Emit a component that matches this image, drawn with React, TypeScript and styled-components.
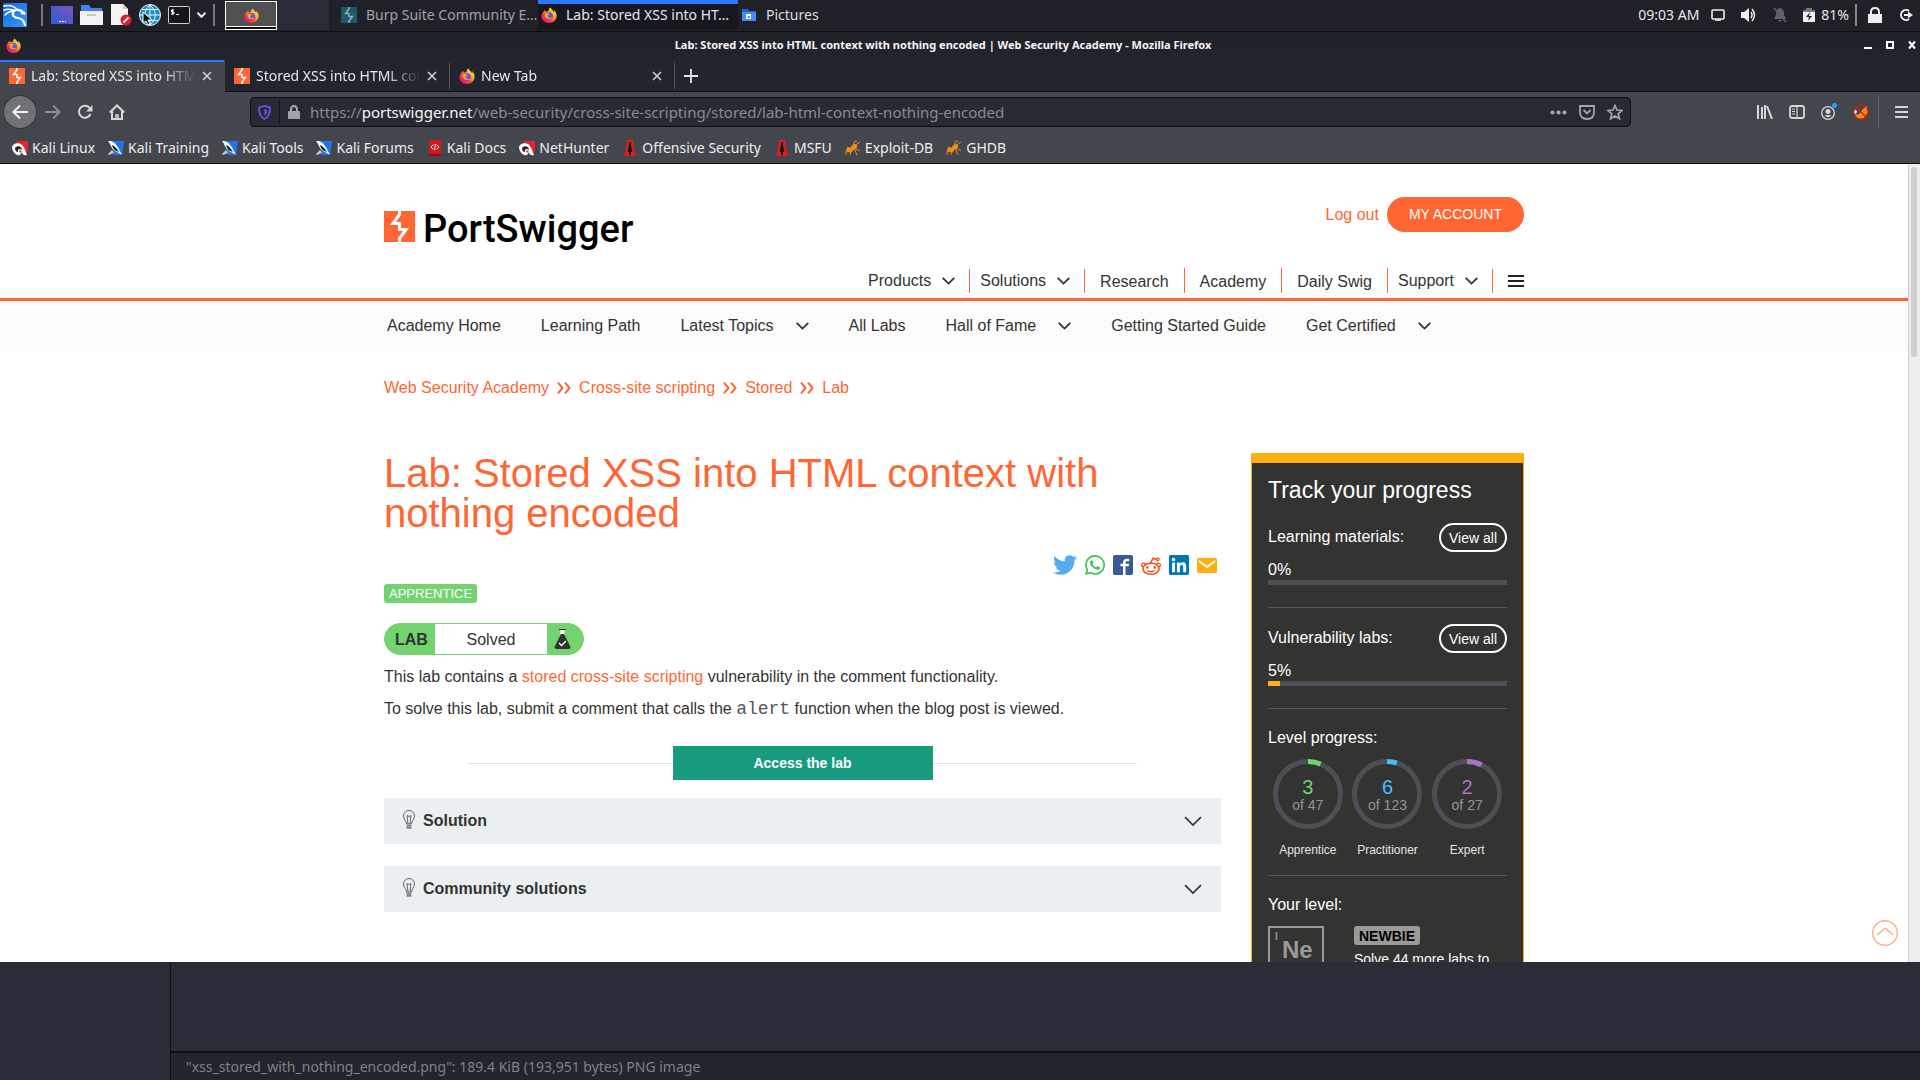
import React from "react";
import styled, { createGlobalStyle } from "styled-components";
import { FaTwitter, FaWhatsapp, FaLinkedin } from "react-icons/fa";
import { ImFacebook2, ImReddit } from "react-icons/im";

const ORANGE = "#ff6633";
const UI = `"Noto Sans", "Open Sans", sans-serif`;
const WEB = `"Liberation Sans", Arial, sans-serif`;

const Global = createGlobalStyle`
  * { box-sizing: border-box; }
  body { margin: 0; background: #2a2c37; overflow: hidden; }
  button { font: inherit; color: inherit; background: none; border: 0; padding: 0; cursor: pointer; }
  a { text-decoration: none; color: inherit; }
  h1, h2, p, ul { margin: 0; padding: 0; font-weight: normal; }
  ul { list-style: none; }
  svg { display: block; flex: none; }
`;

const Desktop = styled.div`
  display: flex;
  flex-direction: column;
  height: 100vh;
  font: 15px/20px ${UI};
  color: #e8e8ea;
  white-space: nowrap;
`;

/* ---------- desktop panel ---------- */
const Panel = styled.header`
  display: flex;
  align-items: stretch;
  height: 32px;
  flex: none;
  background: #1f2028;
  border-bottom: 1px solid #0e0f13;
  font-size: 14px;
`;
const Launchers = styled.nav`
  display: flex;
  align-items: center;
  gap: 7px;
  padding: 0 9px 2px 3px;
`;
const PanelRule = styled.span`
  width: 2px;
  height: 22px;
  margin: 0 1px 0 7px;
  background: #77787c;
  &:last-child { margin-left: 0; }
`;
const Workspaces = styled.div`
  display: flex;
`;
const Workspace = styled.button<{ $active?: boolean }>`
  display: flex;
  align-items: center;
  justify-content: center;
  width: 52px;
  height: ${(p) => (p.$active ? "29px" : "30px")};
  margin-top: ${(p) => (p.$active ? "1px" : "0")};
  background: ${(p) => (p.$active ? "#505050" : "#292b37")};
  border: ${(p) => (p.$active ? "1px solid #fff" : "0")};
  box-shadow: ${(p) => (p.$active ? "inset 0 -2px #111, inset 0 -3px #fff" : "none")};
`;
const Task = styled.button<{ $active?: boolean }>`
  display: flex;
  align-items: center;
  gap: 9px;
  width: 200px;
  height: 30px;
  padding: 0 3px 1px;
  color: ${(p) => (p.$active ? "#e6e6e8" : "#a2a2a6")};
  background: ${(p) => (p.$active ? "#17181f" : "transparent")};
  border-top: ${(p) => (p.$active ? "4px solid #2777ff" : "0")};
  & > span { margin-top: ${(p) => (p.$active ? "-4px" : "0")}; }
  & > svg { margin-top: ${(p) => (p.$active ? "-4px" : "0")}; }
  &:first-child { margin-left: 9px; }
  &:last-child { color: #dcdcde; }
`;
const TaskList = styled.div`
  display: flex;
  flex: 1;
`;
const Tray = styled.div`
  display: flex;
  align-items: center;
  gap: 16px;
  padding: 0 7px 2px 0;
`;
const TrayGroup = styled.span<{ $gap: number }>`
  display: flex;
  align-items: center;
  gap: ${(p) => p.$gap}px;
`;
const TrayRule = styled.span`
  width: 2px;
  height: 22px;
  margin-right: -5px;
  background: #85868a;
`;

/* ---------- browser chrome ---------- */
const Browser = styled.section`
  display: flex;
  flex-direction: column;
  flex: 1;
  min-height: 0;
`;
const TitleBar = styled.div`
  display: grid;
  grid-template-columns: 1fr auto 1fr;
  align-items: center;
  height: 28px;
  flex: none;
  padding: 0 4px 2px 6px;
  background: linear-gradient(#1f2129, #23252e);
  font-size: 11px;
  font-weight: 700;
  color: #f4f4f4;
  & > span { margin-right: 36px; }
`;
const WindowButtons = styled.div`
  display: flex;
  justify-content: flex-end;
  gap: 14px;
  button { width: 8px; height: 10px; display: flex; align-items: center; }
`;
const TabStrip = styled.div`
  display: flex;
  height: 32px;
  flex: none;
  background: #23252e;
  border-bottom: 1px solid #111218;
  font-size: 15px;
`;
const Tab = styled.div<{ $active?: boolean; $rule?: boolean }>`
  display: flex;
  align-items: center;
  width: 225px;
  height: ${(p) => (p.$active ? "32px" : "31px")};
  padding: 0 12px 0 9px;
  background: ${(p) => (p.$active ? "#43464c" : "transparent")};
  box-shadow: ${(p) => (p.$active ? "inset 0 2px #2777ff" : "none")};
  border-right: 1px solid transparent;
  border-image: ${(p) => (p.$rule ? "linear-gradient(transparent 4px, #56585f 4px, #56585f 28px, transparent 28px) 1" : "none")};
`;
const TabTitle = styled.button`
  flex: 1;
  overflow: hidden;
  text-align: left;
  margin: 0 6px;
  font-size: 14px;
  mask-image: linear-gradient(90deg, #000 calc(100% - 34px), transparent);
`;
const NewTab = styled.button`
  padding: 0 9px;
`;
const Toolbar = styled.div`
  display: flex;
  align-items: center;
  height: 40px;
  flex: none;
  padding: 0 12px 0 4px;
  background: #43464c;
  color: #d7d7d9;
`;
const BackButton = styled.button`
  display: flex;
  align-items: center;
  justify-content: center;
  width: 32px;
  height: 32px;
  border-radius: 50%;
  background: #707277;
  box-shadow: 0 0 0 1px #33353a;
`;
const NavButtons = styled.div`
  display: flex;
  gap: 16px;
  padding-left: 9px;
`;
const UrlBar = styled.div`
  display: flex;
  align-items: center;
  flex: 1;
  height: 30px;
  margin: 0 126px 0 125px;
  padding: 0 7px;
  gap: 8px;
  background: #272a34;
  border: 1px solid #0e0f14;
  border-radius: 4px;
  color: #a4a5a9;
`;
const UrlRule = styled.span`
  width: 1px;
  height: 22px;
  background: #14151b;
`;
const Url = styled.div`
  flex: 1;
  margin-left: 2px;
  font-size: 15px;
  color: #8a8b90;
  outline: 0;
  b { font-weight: 400; color: #f6f6f6; }
`;
const UrlActions = styled.div`
  display: flex;
  align-items: center;
  gap: 12px;
`;
const ToolButtons = styled.div`
  display: flex;
  align-items: center;
  gap: 16px;
`;
const ToolRule = styled.span`
  width: 1px;
  height: 34px;
  margin: 0 0 0 -7px;
  background: #606268;
`;
const Bookmarks = styled.nav`
  display: flex;
  align-items: center;
  gap: 13px;
  height: 32px;
  flex: none;
  padding: 0 12px;
  background: #43464c;
  border-bottom: 1px solid #0d0e11;
  font-size: 14px;
  color: #eeeef0;
  a { display: flex; align-items: center; gap: 4px; }
`;

/* ---------- web page ---------- */
const PageFrame = styled.div`
  position: relative;
  display: flex;
  flex: 1;
  min-height: 0;
  background: #fff;
`;
const Page = styled.div`
  flex: 1;
  overflow: hidden;
  color: #333332;
  font: 16px/24px ${WEB};
`;
const ScrollTrack = styled.div`
  width: 12px;
  padding: 3px 3px 0 2px;
  background: #ededed;
  border-left: 1px solid #d3cfca;
`;
const ScrollThumb = styled.div`
  height: 190px;
  border-radius: 3px;
  background: #cfcfcf;
`;
const BackToTop = styled.a`
  position: absolute;
  right: 22px;
  bottom: 16px;
`;
const Container = styled.div`
  width: 100%;
  max-width: 1140px;
  margin: 0 auto;
`;
const SiteHeader = styled.header`
  border-bottom: 3px solid ${ORANGE};
`;
const HeaderRow = styled(Container)`
  display: flex;
  justify-content: space-between;
  height: 134px;
`;
const Brand = styled.a`
  display: flex;
  align-items: flex-start;
  gap: 8px;
  padding-top: 47px;
  color: #000;
  font: 500 38px/36px Roboto, sans-serif;
`;
const HeaderRight = styled.div`
  display: flex;
  flex-direction: column;
  justify-content: space-between;
  padding: 33px 0 5px;
`;
const Account = styled.div`
  display: flex;
  justify-content: flex-end;
  align-items: center;
  gap: 8px;
  color: ${ORANGE};
`;
const AccountButton = styled.button`
  height: 35px;
  padding: 0 22px 1px;
  border-radius: 18px;
  background: ${ORANGE};
  color: #fff;
  font-size: 14px;
`;
const MainNav = styled.nav`
  display: flex;
  align-items: flex-end;
`;
const MenuButton = styled.button`
  display: flex;
  align-items: center;
  gap: 11px;
  height: 24px;
  padding: 0 14px 0 10px;
  border-right: 1px solid ${ORANGE};
`;
const MenuLink = styled.a`
  height: 25px;
  line-height: 28px;
  padding: 0 15px;
  border-right: 1px solid ${ORANGE};
`;
const Hamburger = styled.button`
  display: flex;
  align-items: center;
  height: 25px;
  padding-left: 15px;
`;
const SubNav = styled.nav`
  background: #fbfbfb;
`;
const SubRow = styled(Container)`
  display: flex;
  align-items: center;
  gap: 40px;
  height: 50px;
  padding: 0 3px;
  button { display: flex; align-items: center; gap: 22px; }
`;
const Crumbs = styled(Container)`
  display: flex;
  align-items: center;
  gap: 8px;
  padding-top: 25px;
  color: ${ORANGE};
`;
const Columns = styled(Container)`
  display: grid;
  grid-template-columns: minmax(0, 837px) 273px;
  justify-content: space-between;
  align-items: start;
  padding-top: 53px;
`;
const Article = styled.main`
  display: flex;
  flex-direction: column;
  align-items: flex-start;
`;
const Heading = styled.h1`
  font-size: 40px;
  line-height: 40px;
  color: ${ORANGE};
  white-space: normal;
`;
const Share = styled.div`
  display: flex;
  align-self: flex-end;
  align-items: center;
  gap: 8px;
  height: 20px;
  margin: 22px 4px 9px 0;
`;
const Badge = styled.span<{ $bg: string }>`
  display: inline-block;
  height: 19px;
  padding: 0 5px;
  border-radius: 3px;
  background: ${(p) => p.$bg};
  font-size: 13px;
  line-height: 19px;
  color: #fff;
`;
const NewbieBadge = styled(Badge)`
  font-size: 14px;
  font-weight: 700;
  line-height: 20px;
  color: #000;
`;
const LabStatus = styled.div`
  display: grid;
  grid-template-columns: 50px 112px 36px;
  width: 200px;
  height: 32px;
  margin: 20px 0 10px;
  border: 1px solid #73d36f;
  border-radius: 16px;
  background: #73d36f;
  overflow: hidden;
  line-height: 31px;
  b { padding-left: 10px; }
  span { background: #fff; text-align: center; }
  svg { margin: 5px 0 0 7px; }
`;
const Para = styled.p`
  & + & { margin-top: 8px; }
  a { color: ${ORANGE}; }
  code { font: 18px/20px "Liberation Mono", monospace; color: #55565a; }
`;
const Access = styled.div`
  display: grid;
  grid-template-columns: 1fr 260px 1fr;
  align-items: center;
  width: 80%;
  margin: 25px auto 18px;
  &::before, &::after { content: ""; height: 1px; background: #e0e2e3; }
`;
const AccessButton = styled.a`
  height: 34px;
  background: #179b7f;
  color: #fff;
  font-size: 14px;
  font-weight: 700;
  line-height: 34px;
  text-align: center;
`;
const Accordion = styled.details`
  width: 100%;
  background: #eaeff2;
  & + & { margin-top: 22px; }
  summary {
    display: flex;
    align-items: center;
    height: 46px;
    padding: 0 19px;
    font-weight: 700;
    list-style: none;
    cursor: pointer;
  }
  summary span { flex: 1; padding-left: 8px; }
  summary svg:first-child { margin-bottom: 4px; }
`;
const Tracker = styled.aside`
  padding: 13px 16px;
  border: 1px solid #ffb010;
  border-top-width: 10px;
  background: #333332;
  color: #fff;
  line-height: 20px;
  h2 { font-size: 23px; line-height: 28px; margin-bottom: 19px; }
  hr { height: 1px; border: 0; margin: 22px 0 16px; background: #53555b; }
`;
const TrackRow = styled.div`
  display: flex;
  justify-content: space-between;
  align-items: center;
  height: 29px;
  margin-bottom: 8px;
  & > span { padding-bottom: 2px; }
`;
const ViewAll = styled.a`
  height: 29px;
  padding: 0 8px;
  border: 2px solid #fff;
  border-radius: 15px;
  font-size: 14px;
  line-height: 26px;
`;
const Meter = styled.div`
  height: 5px;
  background: #4c4f55;
`;
const MeterFill = styled.div`
  height: 5px;
  background: #ffb010;
`;
const SectionLabel = styled.p`
  padding: 3px 0 11px;
`;
const Rings = styled.div`
  display: grid;
  grid-template-columns: repeat(3, 1fr);
  margin-bottom: -5px;
`;
const Level = styled.div`
  display: grid;
  grid-template-rows: 70px auto;
  gap: 13px;
  justify-items: center;
  font-size: 12px;
  line-height: 16px;
  color: #e4e4e4;
  & > svg, & > div { grid-area: 1 / 1; }
`;
const Count = styled.div<{ $color: string }>`
  display: flex;
  flex-direction: column;
  align-items: center;
  padding-top: 18px;
  font-size: 14px;
  line-height: 16px;
  color: #949494;
  b { font-weight: 400; font-size: 20px; line-height: 20px; color: ${(p) => p.$color}; }
`;
const Rank = styled.div`
  display: flex;
  gap: 30px;
  font-size: 14px;
  line-height: 18px;
  p { margin-top: 5px; }
`;
const Element = styled.div`
  display: grid;
  grid-template-columns: 12px 1fr;
  width: 56px;
  height: 58px;
  padding: 3px 0 0 5px;
  border: 2px solid #9a9a98;
  color: #9a9a98;
  font-size: 10px;
  line-height: 12px;
  font-weight: 700;
  b { font-size: 24px; line-height: 38px; margin-left: -5px; }
`;

/* ---------- file manager behind the browser ---------- */
const FileManager = styled.section`
  display: grid;
  grid-template-columns: 171px 1fr;
  height: 118px;
  flex: none;
  background: #2a2c37;
`;
const Places = styled.div`
  border-right: 1px solid #101116;
`;
const Files = styled.div`
  display: flex;
  flex-direction: column;
  justify-content: flex-end;
`;
const StatusBar = styled.footer`
  height: 29px;
  padding-left: 15px;
  border-top: 2px solid #0f1015;
  background: #22252d;
  font-size: 14px;
  line-height: 27px;
  color: #7f8187;
`;

/* ---------- drawings ---------- */
const Bolt = ({ size, bg = ORANGE, fg = "#fff" }: { size: number; bg?: string; fg?: string }) => (
  <svg width={size} height={size} viewBox="0 0 31 31">
    <path fill={bg} d="M0 0h31v31H0z" />
    <path fill={fg} d="M14 0h3v4l-5 7h5v6h8l-8 11v3h-3v-4l5-7h-5v-6H6l8-11z" />
  </svg>
);
const Firefox = ({ size }: { size: number }) => (
  <svg width={size} height={size} viewBox="0 0 32 32">
    <defs>
      <linearGradient id="fx" x1="0.9" y1="0.1" x2="0.2" y2="0.9">
        <stop offset="0" stopColor="#fff04a" />
        <stop offset="0.35" stopColor="#ffa930" />
        <stop offset="0.65" stopColor="#ff4f2a" />
        <stop offset="1" stopColor="#e5127a" />
      </linearGradient>
    </defs>
    <path
      fill="url(#fx)"
      d="M30 12c-1-3-3-5-5-6 1 2 2 4 2 6-2-5-6-6-8-11-3 2-4 4-4 7-2 0-4 1-5 2C9 9 9 7 9 6 5 8 2 12 1 17c-1 9 6 15 15 15 9 0 16-7 15-16 0-1 0-3-1-4z"
    />
    <circle cx="16" cy="18" r="7.500" fill="#6b3fe0" />
    <path fill="#ffa02a" d="M8 13c3-2 6 0 9 0 2 0 1 3-2 4-2 0-2 3 0 4 3 1 6-1 8 0-3 5-13 4-15-2-1-2-1-4 0-6z" />
    <circle cx="18" cy="18" r="4" fill="#4a63e8" />
  </svg>
);
const Chevron = ({ width = 13, height = 8, stroke = 1.8 }) => (
  <svg width={width} height={height} viewBox="0 0 13 8" fill="none" stroke="currentColor" strokeWidth={stroke}>
    <path d="M.7.8 6.500 6.600 12.300.8" />
  </svg>
);
const DoubleChevron = () => (
  <svg width="14" height="12" viewBox="0 0 14 12" fill="none" stroke="currentColor" strokeWidth="2">
    <path d="M1 .7 5.500 6 1 11.300M8 .7 12.500 6 8 11.300" />
  </svg>
);
const Cross = () => (
  <svg width="10" height="10" viewBox="0 0 10 10" stroke="#d0d0d2" strokeWidth="1.600">
    <path d="M1 1l8 8M9 1 1 9" />
  </svg>
);
const Bulb = () => (
  <svg width="12" height="19" viewBox="0 0 12 19" fill="none" stroke="#55585a">
    <path d="M3.500 14c0-3-3-4.500-3-8a5.500 5.500 0 0 1 11 0c0 3.500-3 5-3 8zM5 14 4 5.500l2 1 2-1L7 14" strokeWidth=".9" />
    <path d="M3.500 15.800h5M3.500 17.800h5" strokeWidth="1.300" />
  </svg>
);
const KaliMark = ({ tone }: { tone: "red" | "blue" }) => (
  <svg width="16" height="16" viewBox="0 0 16 16">
    {tone === "blue" ? (
      <>
        <path fill="#1f77f0" d="M2 1h14l-2 14H6z" />
        <path fill="#fff" d="M0 1c5 0 7 2 9 5 2 3 3 5 5 9-3-3-5-2-8-5C3 8 3 4 0 1z" />
        <path fill="#16202c" d="M4 5c3 1 5 4 7 7-4-1-6-3-7-7z" />
        <path fill="#fff" d="M0 14l4-4 2 3-5 2z" opacity=".7" />
      </>
    ) : (
      <>
        <path fill="#e8222e" d="M4 1h12v10l-4 4z" />
        <path fill="#fff" d="M0 8c0-4 5-6 9-4 4 3 4 7 6 11-3 1-5-1-5-3l-2 3C5 16 1 13 0 8z" />
        <path fill="#20242b" d="M3 8c2-3 7-2 7 2-2-2-5-1-4 2-2 0-3-2-3-4z" />
        <path fill="#e8222e" d="M7 10l3 1-2 2z" />
      </>
    )}
  </svg>
);
const DocsMark = () => (
  <svg width="16" height="16" viewBox="0 0 16 16">
    <path fill="#d8141c" d="M2 0h12v14H2z" />
    <path fill="#8d0d12" d="M2 14h12v2H2z" />
    <path d="M6.500 4.500 4 7l2.500 2.500M9.500 4.500 12 7 9.500 9.500M8.500 4l-1 6" stroke="#fff" fill="none" />
  </svg>
);
const Tower = () => (
  <svg width="16" height="16" viewBox="0 0 16 16">
    <path fill="#e01b1b" d="M5 0h6l1 9 2 7H2l2-7z" />
    <path fill="#151515" d="M7.300 2h1.400l.8 6 1 4H9v3H7v-3H5.500l1-4z" />
  </svg>
);
const Ant = () => (
  <svg width="16" height="16" viewBox="0 0 16 16" stroke="#ef8a1d" fill="#ef8a1d">
    <path fill="none" d="M5 9 1 11v4M7 9l-2 6M9 8l3 7M8 7l7 4M7 7 10 1h2M9 6l6-4M5 8 2 7" />
    <ellipse cx="4.500" cy="10" rx="3.500" ry="2.300" stroke="none" />
    <ellipse cx="9" cy="7" rx="3.500" ry="2.300" stroke="none" transform="rotate(-35 9 7)" />
  </svg>
);

const bookmarks: [string, React.ReactNode][] = [
  ["Kali Linux", <KaliMark tone="red" />],
  ["Kali Training", <KaliMark tone="blue" />],
  ["Kali Tools", <KaliMark tone="blue" />],
  ["Kali Forums", <KaliMark tone="blue" />],
  ["Kali Docs", <DocsMark />],
  ["NetHunter", <KaliMark tone="red" />],
  ["Offensive Security", <Tower />],
  ["MSFU", <Tower />],
  ["Exploit-DB", <Ant />],
  ["GHDB", <Ant />],
];

const levels = [
  { name: "Apprentice", done: 3, total: 47, color: "#73d36f" },
  { name: "Practitioner", done: 6, total: 123, color: "#4cbcf9" },
  { name: "Expert", done: 2, total: 27, color: "#ad72c4" },
];

const RingChart = ({ share, color }: { share: number; color: string }) => (
  <svg width="70" height="70" viewBox="0 0 70 70" fill="none" strokeWidth="5">
    <circle cx="35" cy="35" r="32.500" stroke="#4c4f55" />
    <circle
      cx="35"
      cy="35"
      r="32.500"
      stroke={color}
      pathLength={1}
      strokeDasharray={`${share} 1`}
      transform="rotate(-90 35 35)"
    />
  </svg>
);

const DesktopPanel = () => (
  <Panel>
    <Launchers aria-label="Launchers">
      <svg width="24" height="24" viewBox="0 0 24 24">
        <defs>
          <linearGradient id="kali" x1="0" y1="0" x2="1" y2="1">
            <stop offset="0" stopColor="#1a66d8" />
            <stop offset="1" stopColor="#2f9bff" />
          </linearGradient>
        </defs>
        <rect width="24" height="24" rx="1" fill="url(#kali)" />
        <path
          fill="none"
          stroke="#fff"
          strokeWidth="1.500"
          strokeLinecap="round"
          d="M1 3q8-2 14 4M1 7q6-2 11 1M2 12q4-4 9-4"
        />
        <path
          fill="none"
          stroke="#fff"
          strokeWidth="2.200"
          strokeLinecap="round"
          d="M11 7.500c-3 5 0 7 4 7.500 4 .5 6 3 7 7M13 7q5-1 7 3"
        />
        <path fill="#fff" d="M17 6l5 3 1 3-5-1z" />
      </svg>
      <PanelRule />
      <svg width="22" height="22" viewBox="0 0 22 22">
        <defs>
          <linearGradient id="desk" x1="0" y1="1" x2="1" y2="0">
            <stop offset="0" stopColor="#2b5fd0" />
            <stop offset="1" stopColor="#7b52c0" />
          </linearGradient>
        </defs>
        <path fill="url(#desk)" d="M0 2h22v18H0z" />
        <path stroke="#fff" strokeDasharray="2 1" d="M8 17.500h7" />
      </svg>
      <svg width="23" height="22" viewBox="0 0 23 22">
        <path fill="#3d82f0" d="M1 1h8l2 3h11v6H1z" />
        <path fill="#f2f2f4" d="M0 7h23v14H0z" />
        <path stroke="#c5c6ca" strokeWidth="2" d="M7 11h9" />
      </svg>
      <svg width="22" height="22" viewBox="0 0 22 22">
        <path fill="#f4f4f4" d="M1 0h12l5 5v16H1z" />
        <path fill="#cfcfd2" d="M13 0l5 5h-5z" />
        <circle cx="16" cy="16" r="5.500" fill="#e01b24" />
        <path stroke="#fff" strokeWidth="1.800" d="M13.500 18.500l5-5" />
      </svg>
      <svg width="22" height="22" viewBox="0 0 22 22" fill="none" stroke="#e9f6ff">
        <circle cx="11" cy="11" r="10.500" fill="#1a8cc4" />
        <path d="M11 1v20M1 11h20M3 5.500h16M3 16.500h16M11 1C4 7 4 15 11 21M11 1c7 6 7 14 0 20" />
        <path d="M4 8v11l3-2 2 4 2-1-2-4h4z" fill="#111" stroke="#fff" />
      </svg>
      <svg width="22" height="22" viewBox="0 0 22 22">
        <rect x=".5" y="2.500" width="21" height="17" rx="1" fill="#15161a" stroke="#cfd0d2" />
        <path stroke="#fff" fill="none" d="M6 6H3.500v2H6v2H3M4.500 5v6M8 10.500h3" />
      </svg>
      <Chevron width={9} height={6} stroke={3} />
      <PanelRule />
    </Launchers>
    <Workspaces>
      <Workspace $active aria-label="Workspace 1"><Firefox size={15} /></Workspace>
      <Workspace aria-label="Workspace 2" />
    </Workspaces>
    <TaskList>
      <Task><Bolt size={16} bg="#1b5a68" fg="#8fb0b6" /><span>Burp Suite Community E…</span></Task>
      <Task $active><Firefox size={16} /><span>Lab: Stored XSS into HT…</span></Task>
      <Task>
        <svg width="16" height="16" viewBox="0 0 16 16">
          <path fill="#2a5fd0" d="M1 2h6l1 2h7v10H1z" />
          <path fill="#3f8bff" d="M1 5h14v9H1z" />
          <path fill="#fff" d="M5 7h5v5H5z" /><path fill="#3f8bff" d="M7 9h2v2H7z" />
        </svg>
        <span>Pictures</span>
      </Task>
    </TaskList>
    <Tray>
      <TrayGroup $gap={12}>
        <span>09:03 AM</span>
        <svg width="14" height="12" viewBox="0 0 14 12" fill="none" stroke="#eee" strokeWidth="1.600">
          <rect x="1" y="1" width="12" height="9" rx="1" /><path d="M4 11h6" />
        </svg>
      </TrayGroup>
      <svg width="16" height="16" viewBox="0 0 16 16" fill="#eee">
        <path d="M0 5h3l5-4v14l-5-4H0z" /><path fill="none" stroke="#eee" strokeWidth="1.500" d="M10 5q2 3 0 6M11 2q5 6 0 12" />
      </svg>
      <svg width="14" height="16" viewBox="0 0 14 16" fill="#606168">
        <path d="M7 1c4 1 4 4 4 7l2 4H1l2-4c0-3 0-6 4-7zM5 13h4l-2 2z" /><path stroke="#606168" strokeWidth="1.500" d="M1 1l12 14" />
      </svg>
      <TrayGroup $gap={6}>
        <svg width="12" height="16" viewBox="0 0 12 16">
          <path fill="#77787c" d="M3 1h6v2h3v3H0V3h3z" /><path fill="#f0f0f0" d="M0 5h12v10H0z" /><path fill="#1f2028" d="M7 5 3 10h3l-1 4 4-5H6z" />
        </svg>
        <span>81%</span>
        <TrayRule />
      </TrayGroup>
      <svg width="14" height="16" viewBox="0 0 14 16" fill="#eee">
        <path d="M0 7h14v9H0z" /><path fill="none" stroke="#eee" strokeWidth="2" d="M3 8V5q0-4 4-4t4 4v3" />
      </svg>
      <svg width="15" height="14" viewBox="0 0 15 14" fill="none" stroke="#eee" strokeWidth="2">
        <path d="M11 3a5 5 0 1 0 0 8M6 7h5" /><path fill="#eee" stroke="none" d="M10 3.500 15 7l-5 3.500z" />
      </svg>
    </Tray>
  </Panel>
);

const BrowserChrome = () => (
  <>
    <TitleBar>
      <Firefox size={15} />
      <span>Lab: Stored XSS into HTML context with nothing encoded | Web Security Academy - Mozilla Firefox</span>
      <WindowButtons>
        <button aria-label="Minimize"><svg width="8" height="10"><path fill="#fff" d="M0 7h8v2H0z" /></svg></button>
        <button aria-label="Maximize">
          <svg width="8" height="10" fill="none" stroke="#fff" strokeWidth="2"><path d="M1 2h6v6H1z" /></svg>
        </button>
        <button aria-label="Close">
          <svg width="8" height="10" stroke="#fff" strokeWidth="2"><path d="M1 1.500l6 7M7 1.500l-6 7" /></svg>
        </button>
      </WindowButtons>
    </TitleBar>
    <TabStrip>
      <Tab $active><Bolt size={16} /><TabTitle>Lab: Stored XSS into HTML</TabTitle><button aria-label="Close tab"><Cross /></button></Tab>
      <Tab $rule><Bolt size={16} /><TabTitle>Stored XSS into HTML con</TabTitle><button aria-label="Close tab"><Cross /></button></Tab>
      <Tab $rule><Firefox size={16} /><TabTitle>New Tab</TabTitle><button aria-label="Close tab"><Cross /></button></Tab>
      <NewTab aria-label="New tab">
        <svg width="14" height="14" stroke="#e4e4e6" strokeWidth="1.800"><path d="M7 0v14M0 7h14" /></svg>
      </NewTab>
    </TabStrip>
    <Toolbar>
      <BackButton aria-label="Back">
        <svg width="16" height="16" fill="none" stroke="#f2f2f2" strokeWidth="2"><path d="M16 8H1.500M8 1.500 1.500 8 8 14.500" /></svg>
      </BackButton>
      <NavButtons>
        <button aria-label="Forward">
          <svg width="16" height="16" fill="none" stroke="#8b8d92" strokeWidth="2"><path d="M0 8h14.500M8 1.500 14.500 8 8 14.500" /></svg>
        </button>
        <button aria-label="Reload">
          <svg width="16" height="16" fill="none" stroke="currentColor" strokeWidth="2"><path d="M13 4.500A6 6 0 1 0 13.500 10" /><path fill="currentColor" stroke="none" d="M15.500 1v6.500H9z" /></svg>
        </button>
        <button aria-label="Home">
          <svg width="16" height="16" fill="none" stroke="currentColor" strokeWidth="2"><path d="M.8 8.500 8 1.500l7.200 7M3 7v8h10V7" /><path d="M7 15v-4h2v4" strokeWidth="1.500" /></svg>
        </button>
      </NavButtons>
      <UrlBar>
        <svg width="13" height="15" viewBox="0 0 13 15" fill="none" stroke="#6a52e8" strokeWidth="1.800">
          <path d="M1 2.500 6.500 1 12 2.500C12 8 11 12 6.500 14 2 12 1 8 1 2.500z" /><path d="M6.500 4v7c1.500-1 2.500-3 2.500-6z" fill="#5b62e8" stroke="none" />
        </svg>
        <UrlRule />
        <svg width="12" height="14" viewBox="0 0 12 14" fill="currentColor">
          <rect y="6" width="12" height="8" rx="1" /><path fill="none" stroke="currentColor" strokeWidth="2" d="M3 7V4.500q0-3.500 3-3.500t3 3.500V7" />
        </svg>
        <Url role="textbox" aria-label="Address" contentEditable suppressContentEditableWarning>
          https://<b>portswigger.net</b>/web-security/cross-site-scripting/stored/lab-html-context-nothing-encoded
        </Url>
        <UrlActions>
          <svg width="17" height="5" fill="currentColor"><circle cx="2.500" cy="2.500" r="2.100" /><circle cx="8.500" cy="2.500" r="2.100" /><circle cx="14.500" cy="2.500" r="2.100" /></svg>
          <svg width="16" height="15" fill="none" stroke="currentColor" strokeWidth="1.800"><path d="M1 1h14v6q0 7-7 7T1 7z" /><path d="M4.500 5 8 8.500 11.500 5" /></svg>
          <svg width="16" height="16" fill="none" stroke="currentColor" strokeWidth="1.700"><path d="M8 1.500 10 6l5 .5-3.800 3.300 1.200 5L8 12l-4.400 2.800 1.200-5L1 6.500 6 6z" /></svg>
        </UrlActions>
      </UrlBar>
      <ToolButtons>
        <svg width="16" height="14" stroke="currentColor" strokeWidth="2"><path d="M1 0v14M5 2v12M8 0v14M10 1l5 13" /></svg>
        <svg width="16" height="14" fill="none" stroke="currentColor" strokeWidth="1.800"><rect x="1" y="1" width="14" height="12" rx="2" /><path d="M8 1v12M3 4h3M3 6.500h3M3 9h3" strokeWidth="1.200" /></svg>
        <svg width="16" height="18" viewBox="0 0 16 18" fill="none" stroke="currentColor" strokeWidth="1.300">
          <circle cx="7" cy="10" r="6.300" /><circle cx="7" cy="8.500" r="2.500" fill="currentColor" stroke="none" /><path d="M3.500 12.500q3.500-1 7 0-3.500 3.500-7 0" fill="currentColor" stroke="none" />
          <circle cx="13.500" cy="2.500" r="2.500" fill="#10a8ff" stroke="none" />
        </svg>
        <svg width="16" height="16" viewBox="0 0 16 16">
          <path fill="#f08a16" d="M14 2l1 6-4 6-6 1-4-4 5-1 4-5z" /><path fill="#fff" d="M1 5l3 2-1 3-2-1zM12 3l2-1v3z" />
          <circle cx="8" cy="8" r="7.200" fill="none" stroke="#d01818" strokeWidth="1.300" /><path stroke="#d01818" strokeWidth="1.300" d="M3 3l10 10" />
        </svg>
        <ToolRule />
        <button aria-label="Menu"><svg width="13" height="12" stroke="currentColor" strokeWidth="2"><path d="M0 1h13M0 6h13M0 11h13" /></svg></button>
      </ToolButtons>
    </Toolbar>
    <Bookmarks aria-label="Bookmarks">
      {bookmarks.map(([name, icon]) => (
        <a href="#" key={name}>{icon}{name}</a>
      ))}
    </Bookmarks>
  </>
);

const ProgressTracker = () => (
  <Tracker>
    <h2>Track your progress</h2>
    <TrackRow><span>Learning materials:</span><ViewAll href="#">View all</ViewAll></TrackRow>
    <div>0%</div>
    <Meter />
    <hr />
    <TrackRow><span>Vulnerability labs:</span><ViewAll href="#">View all</ViewAll></TrackRow>
    <div>5%</div>
    <Meter><MeterFill style={{ width: "5%" }} /></Meter>
    <hr />
    <SectionLabel>Level progress:</SectionLabel>
    <Rings>
      {levels.map((l) => (
        <Level key={l.name}>
          <RingChart share={l.done / l.total} color={l.color} />
          <Count $color={l.color}><b>{l.done}</b><span>of {l.total}</span></Count>
          <span>{l.name}</span>
        </Level>
      ))}
    </Rings>
    <hr />
    <SectionLabel>Your level:</SectionLabel>
    <Rank>
      <Element><span>I</span><b>Ne</b></Element>
      <div>
        <NewbieBadge $bg="#9a9a98">NEWBIE</NewbieBadge>
        <p>Solve 44 more labs to</p>
      </div>
    </Rank>
  </Tracker>
);

const LabPage = () => (
  <Page>
    <SiteHeader>
      <HeaderRow>
        <Brand href="#"><Bolt size={31} />PortSwigger</Brand>
        <HeaderRight>
          <Account><a href="#">Log out</a><AccountButton>MY ACCOUNT</AccountButton></Account>
          <MainNav>
            <MenuButton>Products<Chevron /></MenuButton>
            <MenuButton>Solutions<Chevron /></MenuButton>
            <MenuLink href="#">Research</MenuLink>
            <MenuLink href="#">Academy</MenuLink>
            <MenuLink href="#">Daily Swig</MenuLink>
            <MenuButton>Support<Chevron /></MenuButton>
            <Hamburger aria-label="Menu">
              <svg width="16" height="12" fill="#222"><path d="M0 0h16v2H0zM0 5h16v2H0zM0 10h16v2H0z" /></svg>
            </Hamburger>
          </MainNav>
        </HeaderRight>
      </HeaderRow>
    </SiteHeader>
    <SubNav>
      <SubRow>
        <a href="#">Academy Home</a>
        <a href="#">Learning Path</a>
        <button>Latest Topics<Chevron /></button>
        <a href="#">All Labs</a>
        <button>Hall of Fame<Chevron /></button>
        <a href="#">Getting Started Guide</a>
        <button>Get Certified<Chevron /></button>
      </SubRow>
    </SubNav>
    <Crumbs>
      <a href="#">Web Security Academy</a><DoubleChevron />
      <a href="#">Cross-site scripting</a><DoubleChevron />
      <a href="#">Stored</a><DoubleChevron />
      <a href="#">Lab</a>
    </Crumbs>
    <Columns>
      <Article>
        <Heading>Lab: Stored XSS into HTML context with nothing encoded</Heading>
        <Share>
          <FaTwitter size={24} color="#55acee" />
          <FaWhatsapp size={20} viewBox="0 32 448 448" color="#3dc24a" />
          <ImFacebook2 size={20} color="#3b5998" />
          <ImReddit size={20} color="#ff4500" />
          <FaLinkedin size={20} viewBox="0 32 448 448" color="#0077b5" />
          <svg width="20" height="15" viewBox="0 0 20 15">
            <rect width="20" height="15" rx="1.500" fill="#ffb010" /><path d="M2 3l8 6 8-6" fill="none" stroke="#fff" strokeWidth="1.800" />
          </svg>
        </Share>
        <Badge $bg="#73d36f">APPRENTICE</Badge>
        <LabStatus>
          <b>LAB</b>
          <span>Solved</span>
          <svg width="17" height="20" viewBox="0 0 17 20">
            <path fill="#fff" d="M6.500 1h4v5h-4z" />
            <path stroke="#333" d="M5 .5h7" />
            <path fill="#333332" d="M7 5h3l6.500 13q0 2-2 2h-12q-2 0-2-2z" />
            <path stroke="#fff" fill="none" strokeWidth="1.300" d="M5 14l2.500 2.500L12 12" />
          </svg>
        </LabStatus>
        <Para>This lab contains a <a href="#">stored cross-site scripting</a> vulnerability in the comment functionality.</Para>
        <Para>To solve this lab, submit a comment that calls the <code>alert</code> function when the blog post is viewed.</Para>
        <Access><AccessButton href="#">Access the lab</AccessButton></Access>
        <Accordion><summary><Bulb /><span>Solution</span><Chevron width={18} height={11} stroke={1.2} /></summary></Accordion>
        <Accordion><summary><Bulb /><span>Community solutions</span><Chevron width={18} height={11} stroke={1.2} /></summary></Accordion>
      </Article>
      <ProgressTracker />
    </Columns>
  </Page>
);

export default function App() {
  return (
    <Desktop>
      <Global />
      <DesktopPanel />
      <Browser>
        <BrowserChrome />
        <PageFrame>
          <LabPage />
          <ScrollTrack><ScrollThumb /></ScrollTrack>
          <BackToTop href="#" aria-label="Back to top">
            <svg width="26" height="26" fill="none" stroke="#ffab8f" strokeWidth="1.400">
              <circle cx="13" cy="13" r="12.300" /><path d="M5 15l8-7 8 7" />
            </svg>
          </BackToTop>
        </PageFrame>
      </Browser>
      <FileManager>
        <Places />
        <Files>
          <StatusBar>"xss_stored_with_nothing_encoded.png": 189.4 KiB (193,951 bytes) PNG image</StatusBar>
        </Files>
      </FileManager>
    </Desktop>
  );
}
